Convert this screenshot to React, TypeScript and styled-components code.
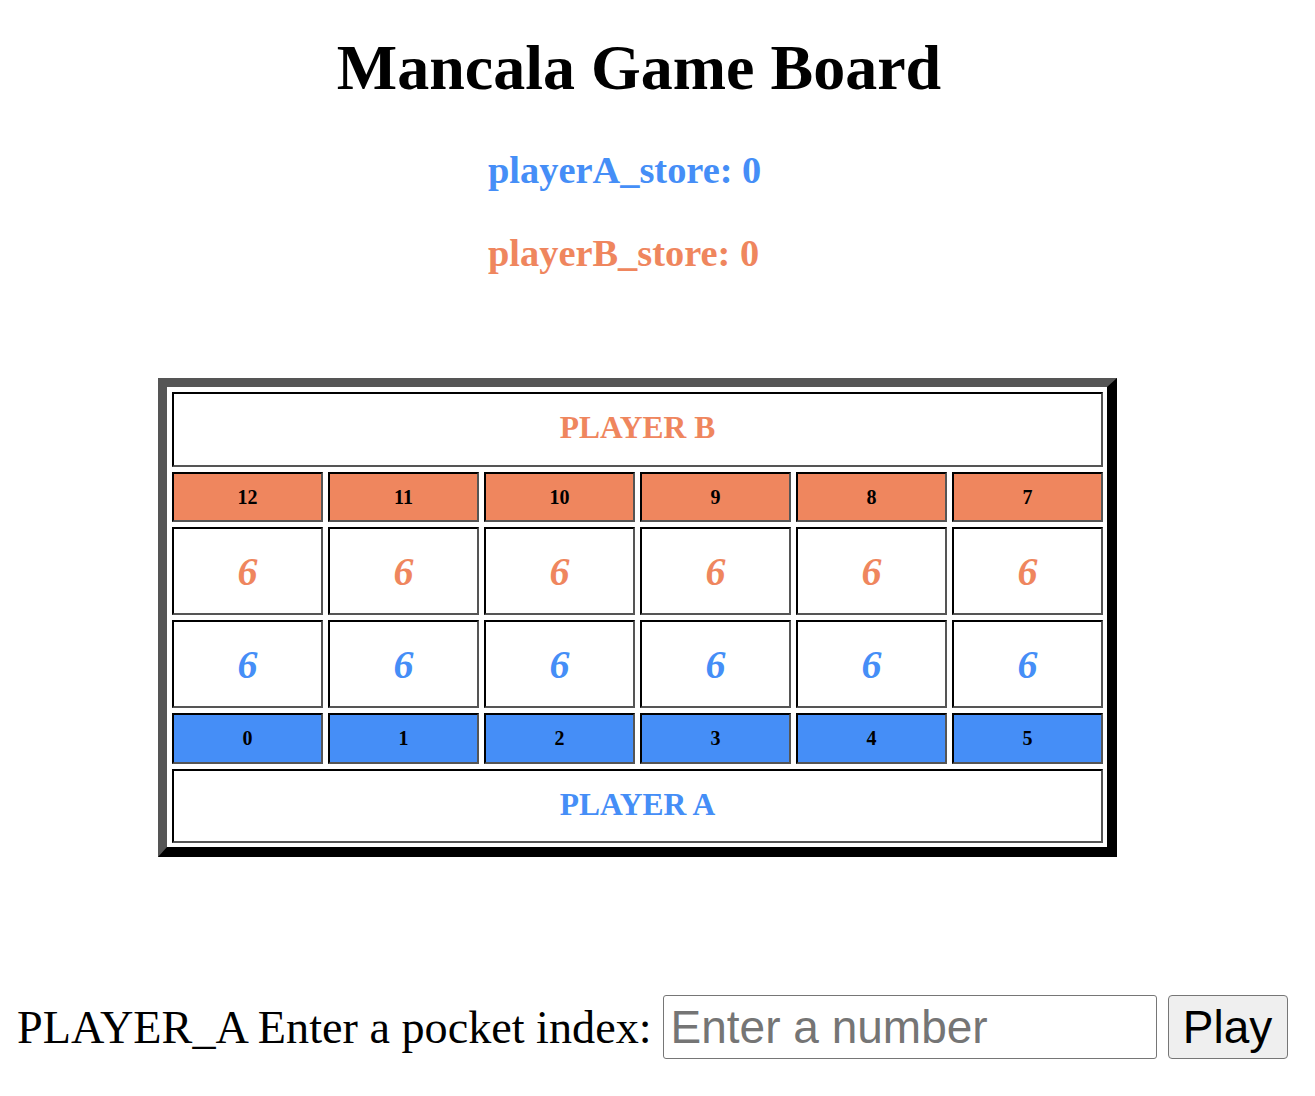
import React from "react";
import styled, { createGlobalStyle } from "styled-components";

const ORANGE = "#EF865E";
const BLUE = "#458EF7";

const Global = createGlobalStyle`
  html, body { margin: 0; padding: 0; background: #fff; }
  body { font-family: "Liberation Serif", "Times New Roman", serif; color: #000; }
`;

const Page = styled.main`
  width: 1262px;
  margin-left: 8px;
  padding-top: 36px;
  display: flex;
  flex-direction: column;
  align-items: center;
`;

const Title = styled.h1`
  margin: 0;
  font-size: 64px;
  line-height: 64px;
  font-weight: 700;
`;

const Stores = styled.div`
  width: 302px;
  margin-top: 51px;
  display: flex;
  flex-direction: column;
  gap: 45px;
`;

const StoreLine = styled.p<{ $color: string }>`
  margin: 0;
  font-size: 38.4px;
  line-height: 38px;
  font-weight: 700;
  color: ${(p) => p.$color};
`;

const Board = styled.div`
  margin-top: 106px;
  margin-right: 3px;
  display: grid;
  grid-template-columns: repeat(6, 151px);
  grid-template-rows: 75px 50px 88px 88px 51px 74px;
  gap: 5px;
  padding: 5px 4px 4px 5px;
  border-style: solid;
  border-width: 9px 10px 10px 9px;
  border-color: #555 #000 #000 #555;
`;

const CellBase = styled.div`
  box-sizing: border-box;
  border-style: solid;
  border-width: 2px;
  border-color: #000 #555 #555 #000;
  display: flex;
  align-items: center;
  justify-content: center;
  font-weight: 700;
`;

const PlayerLabel = styled(CellBase)<{ $color: string }>`
  grid-column: 1 / -1;
  padding-bottom: 3px;
  background: #fff;
  color: ${(p) => p.$color};
  font-size: 31.5px;
`;

const PocketIndex = styled(CellBase)<{ $bg: string }>`
  background: ${(p) => p.$bg};
  color: #000;
  font-size: 20px;
`;

const PocketStones = styled(CellBase)<{ $color: string }>`
  background: #fff;
  color: ${(p) => p.$color};
  font-size: 40px;
  font-style: italic;
`;

const BottomRow = styled.form`
  margin: 138px 0 0 0;
  padding-left: 17px;
  display: flex;
  align-items: center;
  gap: 11px;
  height: 64px;
`;

const Prompt = styled.label`
  font-size: 46.2px;
  white-space: nowrap;
`;

const NumberInput = styled.input`
  box-sizing: border-box;
  width: 494px;
  height: 64px;
  margin: 0;
  padding: 1px 7px;
  border: 1px solid #767676;
  border-radius: 3px;
  background: #fff;
  font-family: "Liberation Sans", Arial, sans-serif;
  font-size: 46px;
  color: #000;
  &::placeholder {
    color: #757575;
  }
`;

const PlayButton = styled.button`
  box-sizing: border-box;
  width: 120px;
  height: 64px;
  margin: 0;
  padding: 0;
  border: 1px solid #767676;
  border-radius: 4px;
  background: #efefef;
  font-family: "Liberation Sans", Arial, sans-serif;
  font-size: 46px;
  color: #000;
`;

const topIndices = [12, 11, 10, 9, 8, 7];
const bottomIndices = [0, 1, 2, 3, 4, 5];
const pocketStones = (index: number) => (index === 6 || index === 13 ? 0 : 6);

export default function App() {
  return (
    <>
      <Global />
      <Page>
        <Title>Mancala Game Board</Title>
        <Stores>
          <StoreLine $color={BLUE}>playerA_store: 0</StoreLine>
          <StoreLine $color={ORANGE}>playerB_store: 0</StoreLine>
        </Stores>
        <Board>
          <PlayerLabel $color={ORANGE}>PLAYER B</PlayerLabel>
          {topIndices.map((i) => (
            <PocketIndex key={`ti${i}`} $bg={ORANGE}>
              {i}
            </PocketIndex>
          ))}
          {topIndices.map((i) => (
            <PocketStones key={`ts${i}`} $color={ORANGE}>
              {pocketStones(i)}
            </PocketStones>
          ))}
          {bottomIndices.map((i) => (
            <PocketStones key={`bs${i}`} $color={BLUE}>
              {pocketStones(i)}
            </PocketStones>
          ))}
          {bottomIndices.map((i) => (
            <PocketIndex key={`bi${i}`} $bg={BLUE}>
              {i}
            </PocketIndex>
          ))}
          <PlayerLabel $color={BLUE}>PLAYER A</PlayerLabel>
        </Board>
      </Page>
      <BottomRow onSubmit={(e) => e.preventDefault()}>
        <Prompt htmlFor="pocket">PLAYER_A Enter a pocket index:</Prompt>
        <NumberInput id="pocket" type="text" placeholder="Enter a number" />
        <PlayButton type="submit">Play</PlayButton>
      </BottomRow>
    </>
  );
}
